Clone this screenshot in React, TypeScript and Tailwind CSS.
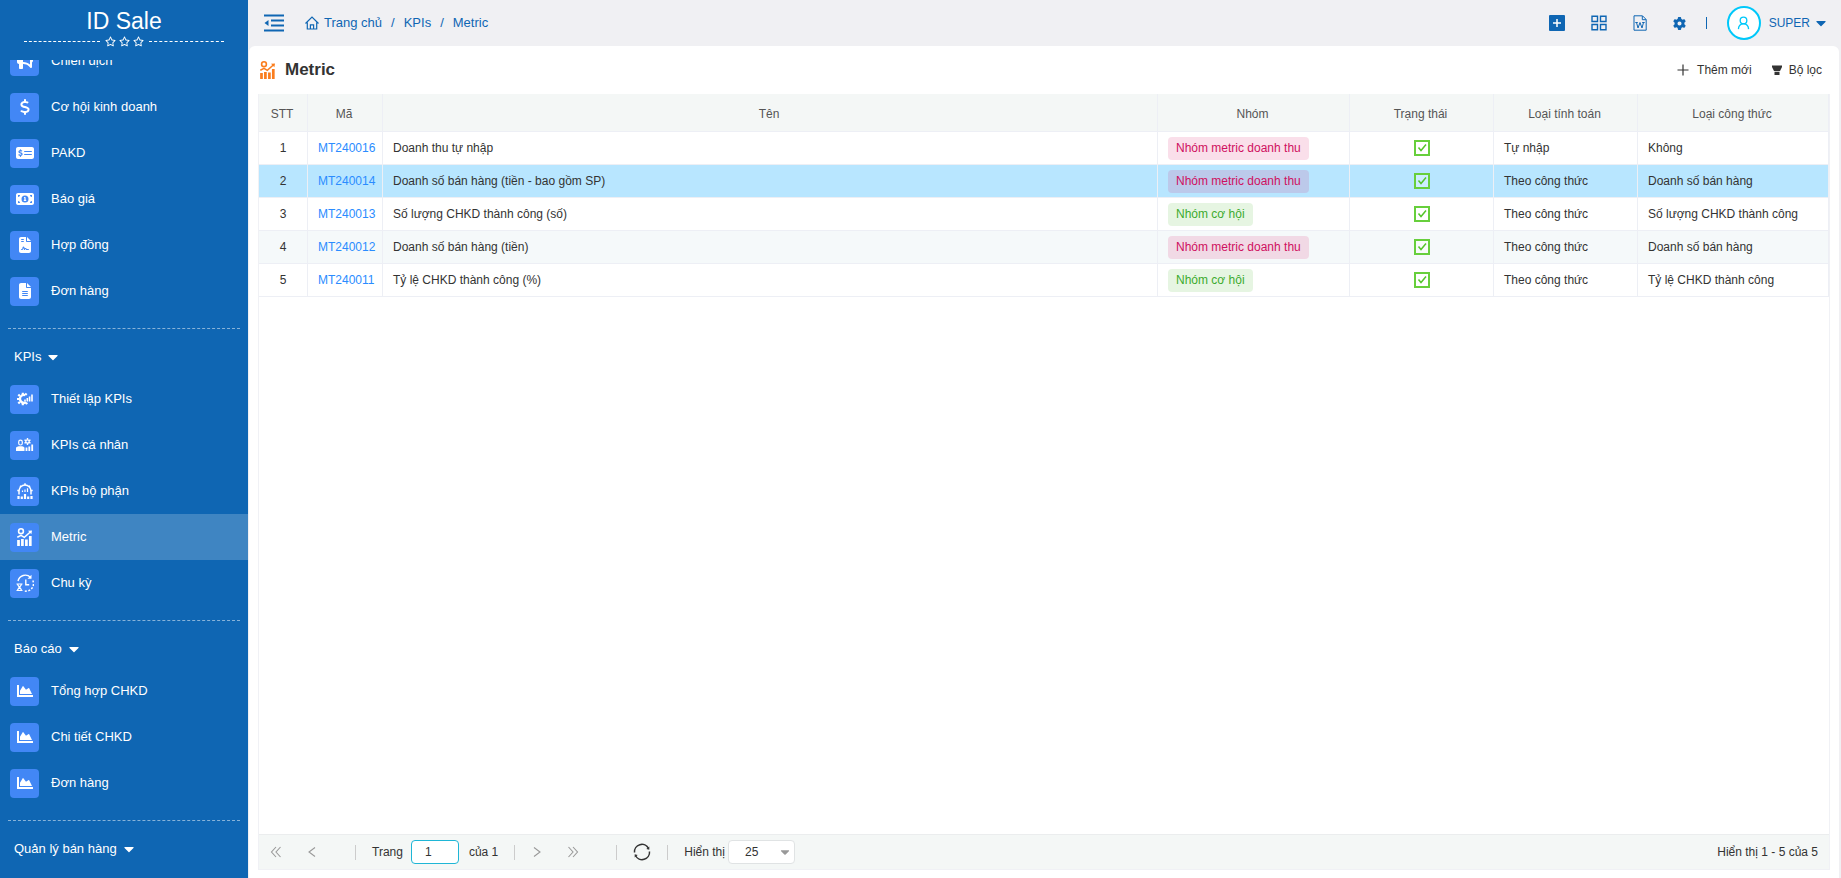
import React, { useState } from 'react';
import { FaCaretDown, FaChartArea } from 'react-icons/fa';
import {
  FaBullhorn,
  FaDollarSign,
  FaFileContract,
  FaFileLines,
  FaGear,
  FaMoneyBill1,
  FaMoneyCheckDollar,
  FaRegStar,
} from 'react-icons/fa6';

type IconProps = { className?: string };

const MetricIcon = ({ className }: IconProps) => (
  <svg viewBox="0 0 15 18" className={className} fill="none" stroke="currentColor" aria-hidden="true">
    <circle cx="4" cy="3.200" r="2.400" strokeWidth="1.600" />
    <path d="M.300 9.300L4 7.300l3.300 2L13.300 4" strokeWidth="1.500" />
    <path d="M11 2.800l4-.300-.600 3.800z" fill="currentColor" stroke="none" />
    <path d="M1.500 12v6M5.400 11v7M9.400 11.500v6.500M13.300 8v10" strokeWidth="2.700" />
  </svg>
);

const GearChartIcon = ({ className }: IconProps) => (
  <svg viewBox="0 0 16 16" className={className} fill="none" stroke="currentColor" aria-hidden="true">
    <path d="M8.500 4.200A4 4 0 1 0 9 11.300" strokeWidth="2.400" />
    <path d="M5.800 4V1.800M2.800 5L1.300 3.500M2 8H0M2.800 11l-1.500 1.500M5.800 12v2.200M9 11.500l1 1.700M8.500 4l1-1.600" strokeWidth="2.200" />
    <path d="M8 8.500v2M10.300 7v3.500M12.600 5.500v5M15 3.500v7" strokeWidth="1.600" />
  </svg>
);

const PersonKpiIcon = ({ className }: IconProps) => (
  <svg viewBox="0 0 18 16" className={className} fill="none" stroke="currentColor" aria-hidden="true">
    <path d="M2.700 5a1.800 1.800 0 0 1 3.600 0v1.200a1.800 1.800 0 0 1-3.600 0z" strokeWidth="1.200" />
    <path d="M0 14v-3c0-1.200 1.800-1.700 4.500-1.700S8.500 9.800 8.500 11v3z" fill="currentColor" stroke="none" />
    <circle cx="11.500" cy="4.500" r="1.700" strokeWidth="1.300" />
    <path d="M11.500 1v1.800M11.500 6.200V8M8.500 2.800l1.500.800M13 5.400l1.500.800M8.500 6.200l1.500-.800M13 3.600l1.500-.800" strokeWidth="1.400" />
    <path d="M10.500 14v-3.500M13.300 14v-4.500M16.200 14V7.500" strokeWidth="1.800" />
  </svg>
);

const TeamKpiIcon = ({ className }: IconProps) => (
  <svg viewBox="0 0 16 16" className={className} fill="none" stroke="currentColor" aria-hidden="true">
    <path d="M2 11.500V8a6 6 0 0 1 12 0v3.500" strokeWidth="1.500" />
    <path d="M8 .300v2M3 2.700l1.300 1.400M13 2.700l-1.300 1.400M.300 7.500h2M13.700 7.500h2" strokeWidth="1.500" />
    <path d="M5.500 9V7.500M8 9V6.500M10.500 9V5.200" strokeWidth="1.200" />
    <path d="M1.500 16v-3M4.800 16v-2.500M8 16v-5M11.200 16v-2.500M14.500 16v-3" strokeWidth="2.200" />
  </svg>
);

const CycleIcon = ({ className }: IconProps) => (
  <svg viewBox="0 0 18 18" className={className} fill="none" stroke="currentColor" aria-hidden="true">
    <path d="M2 7a7.500 7.500 0 0 1 12.500-3.700" strokeWidth="1.400" />
    <path d="M15.500.800v4h-4z" fill="currentColor" stroke="none" />
    <path d="M16.800 6.500A7.500 7.500 0 0 1 8.500 17" strokeWidth="1.500" strokeDasharray="2 1.500" />
    <path d="M9.800 5.500v5.300h3.400" strokeWidth="1.400" />
    <path d="M.500 10h6M.500 16.500h6M1.500 10c0 2 4 4.500 4 6.500M5.500 10c0 2-4 4.500-4 6.500" strokeWidth="1.200" />
  </svg>
);

const CollapseIcon = () => (
  <svg viewBox="0 0 20 18" className="h-[18px] w-5" fill="none" stroke="currentColor" aria-hidden="true">
    <path d="M0 1.500h20M7 6.500h13M7 11.500h13M0 16.500h20" strokeWidth="1.800" />
    <path d="M4.500 6v6L.500 9z" fill="currentColor" stroke="none" />
  </svg>
);

const HomeIcon = () => (
  <svg viewBox="0 0 14 14" className="size-[14px]" fill="none" stroke="currentColor" aria-hidden="true">
    <path d="M.500 7.500L7 1l6.500 6.500M2.300 6.500V13h9.400V6.500M5.400 13V8.800h3.200V13" strokeWidth="1.200" />
  </svg>
);

const PlusSquareIcon = () => (
  <svg viewBox="0 0 16 16" className="size-4" aria-hidden="true">
    <rect width="16" height="16" rx="1" fill="currentColor" />
    <path d="M8 4v8M4 8h8" stroke="#fff" strokeWidth="1.500" />
  </svg>
);

const GridIcon = () => (
  <svg viewBox="0 0 16 16" className="size-4" fill="none" stroke="currentColor" strokeWidth="1.400" aria-hidden="true">
    <path d="M1 1.200h5.500v5.300H1zM9.500 1.200H15v5.300H9.500zM1 9.500h5.500v5.300H1zM9.500 9.500H15v5.300H9.500z" />
  </svg>
);

const WordIcon = () => (
  <svg viewBox="0 0 14 16" className="h-4 w-[14px]" fill="none" stroke="currentColor" aria-hidden="true">
    <path d="M1 .800h8.500l3.700 3.700v10.700H1z" />
    <path d="M9.300 1v3.700H13" />
    <path d="M2.300 7.500h2.500M9.200 7.500h2.500M3.500 7.500L5 13l2-5.500L9 13l1.500-5.500" />
  </svg>
);

const UserIcon = () => (
  <svg viewBox="0 0 14 16" className="h-[14px] w-[13px]" fill="none" stroke="currentColor" strokeWidth="1.500" aria-hidden="true">
    <circle cx="7" cy="5" r="3.800" />
    <path d="M1.200 15c.200-3.500 2.300-6 5.800-6s5.600 2.500 5.800 6" />
  </svg>
);

const AddIcon = () => (
  <svg viewBox="0 0 12 12" className="size-3" stroke="currentColor" aria-hidden="true">
    <path d="M6 .500v11M.500 6h11" strokeWidth="1.200" />
  </svg>
);

const FilterIcon = () => (
  <svg viewBox="0 0 10 11" className="h-[11px] w-[10px]" fill="currentColor" aria-hidden="true">
    <path d="M0 .500h10v1.500L8 6H2L0 2zM2.500 6.800h5V10h-5z" />
  </svg>
);

const RefreshIcon = () => (
  <svg viewBox="0 0 18 18" className="size-[18px]" fill="none" stroke="currentColor" strokeWidth="1.500" aria-hidden="true">
    <path d="M1.500 9.500A7.400 7.400 0 0 1 15.500 5.500M16.500 8.500A7.400 7.400 0 0 1 2.500 12.500" />
    <path d="M16.300 3.500v3.200l-3-.700zM1.700 14.500v-3.200l3 .700z" fill="currentColor" stroke="none" />
  </svg>
);

const Chevron = ({ double, right }: { double?: boolean; right?: boolean }) => (
  <svg
    viewBox="0 0 12 12"
    className={right ? 'size-3 rotate-180' : 'size-3'}
    fill="none"
    stroke="currentColor"
    strokeWidth="1.100"
    aria-hidden="true"
  >
    {double ? <path d="M6 1L1.500 6 6 11M10.500 1L6 6l4.500 5" /> : <path d="M9 1.500L3 6l6 4.500" />}
  </svg>
);

const faIcon = 'size-4';

const menuSections = [
  {
    title: '',
    items: [
      { label: 'Chiến dịch', icon: <FaBullhorn className={faIcon} /> },
      { label: 'Cơ hội kinh doanh', icon: <FaDollarSign className={faIcon} /> },
      { label: 'PAKD', icon: <FaMoneyCheckDollar className="size-[18px]" /> },
      { label: 'Báo giá', icon: <FaMoneyBill1 className="size-[18px]" /> },
      { label: 'Hợp đồng', icon: <FaFileContract className={faIcon} /> },
      { label: 'Đơn hàng', icon: <FaFileLines className={faIcon} /> },
    ],
  },
  {
    title: 'KPIs',
    items: [
      { label: 'Thiết lập KPIs', icon: <GearChartIcon className={faIcon} /> },
      { label: 'KPIs cá nhân', icon: <PersonKpiIcon className="h-4 w-[18px]" /> },
      { label: 'KPIs bộ phận', icon: <TeamKpiIcon className={faIcon} /> },
      { label: 'Metric', icon: <MetricIcon className="h-[18px] w-[15px]" /> },
      { label: 'Chu kỳ', icon: <CycleIcon className="size-[18px]" /> },
    ],
  },
  {
    title: 'Báo cáo',
    items: [
      { label: 'Tổng hợp CHKD', icon: <FaChartArea className={faIcon} /> },
      { label: 'Chi tiết CHKD', icon: <FaChartArea className={faIcon} /> },
      { label: 'Đơn hàng', icon: <FaChartArea className={faIcon} /> },
    ],
  },
  { title: 'Quản lý bán hàng', items: [] },
];

const metrics = [
  { code: 'MT240016', name: 'Doanh thu tự nhập', group: 'Nhóm metric doanh thu', calc: 'Tự nhập', formula: 'Không' },
  { code: 'MT240014', name: 'Doanh số bán hàng (tiền - bao gồm SP)', group: 'Nhóm metric doanh thu', calc: 'Theo công thức', formula: 'Doanh số bán hàng' },
  { code: 'MT240013', name: 'Số lượng CHKD thành công (số)', group: 'Nhóm cơ hội', calc: 'Theo công thức', formula: 'Số lượng CHKD thành công' },
  { code: 'MT240012', name: 'Doanh số bán hàng (tiền)', group: 'Nhóm metric doanh thu', calc: 'Theo công thức', formula: 'Doanh số bán hàng' },
  { code: 'MT240011', name: 'Tỷ lệ CHKD thành công (%)', group: 'Nhóm cơ hội', calc: 'Theo công thức', formula: 'Tỷ lệ CHKD thành công' },
];

const columns = [
  { title: 'STT', width: 'w-[49px]' },
  { title: 'Mã', width: 'w-[75px]' },
  { title: 'Tên', width: '' },
  { title: 'Nhóm', width: 'w-48' },
  { title: 'Trạng thái', width: 'w-36' },
  { title: 'Loại tính toán', width: 'w-36' },
  { title: 'Loại công thức', width: 'w-[191px]' },
];

const Sidebar = ({ active, onSelect }: { active: string; onSelect: (key: string) => void }) => (
  <aside className="flex w-[248px] shrink-0 flex-col overflow-hidden bg-[#0f66b3] text-[13px] text-white">
    <div className="flex h-[60px] shrink-0 flex-col items-center px-6 pt-[6px]">
      <h1 className="text-[23px] leading-[30px]">ID Sale</h1>
      <div className="flex w-full items-center gap-1">
        <span className="flex-1 border-t border-dashed border-white" />
        <span className="flex gap-[3px] px-px">
          <FaRegStar className="size-[11px]" />
          <FaRegStar className="size-[11px]" />
          <FaRegStar className="size-[11px]" />
        </span>
        <span className="flex-1 border-t border-dashed border-white" />
      </div>
    </div>
    <nav className="min-h-0 flex-1 overflow-hidden">
      {/* list is scrolled a little, the first entry is cut by the header */}
      <div className="-mt-[22px]">
        {menuSections.map((section) => (
          <div key={section.title}>
            {section.title && (
              <div className="mt-[14px]">
                <div className="mx-2 border-t border-dashed border-white/50" />
                <button className="flex h-[47px] w-full items-center gap-1 px-[14px] pt-[9px]">
                  {section.title}
                  <FaCaretDown className="size-4" />
                </button>
              </div>
            )}
            {section.items.map((item) => {
              const key = section.title + item.label;
              return (
                <a
                  key={key}
                  href="#"
                  onClick={() => onSelect(key)}
                  className={`flex h-[46px] items-center gap-3 px-[10px] ${active === key ? 'bg-[#3f85c2]' : ''}`}
                >
                  <span className="flex size-[29px] items-center justify-center rounded bg-[#4287f5]">{item.icon}</span>
                  {item.label}
                </a>
              );
            })}
          </div>
        ))}
      </div>
    </nav>
  </aside>
);

const TopBar = () => (
  <header className="flex h-[46px] shrink-0 items-center justify-between pr-3 pl-4 text-[#0f66b3]">
    <div className="flex items-center gap-[21px]">
      <button aria-label="Thu gọn">
        <CollapseIcon />
      </button>
      <nav className="flex items-center gap-[9px] text-[13px]">
        <a href="#" className="flex items-center gap-[5px]">
          <HomeIcon />
          Trang chủ
        </a>
        <span>/</span>
        <a href="#">KPIs</a>
        <span>/</span>
        <a href="#">Metric</a>
      </nav>
    </div>
    <div className="flex items-center text-xs">
      <div className="flex items-center gap-[26px]">
        <button aria-label="Thêm"><PlusSquareIcon /></button>
        <button aria-label="Ứng dụng"><GridIcon /></button>
        <button aria-label="Tài liệu"><WordIcon /></button>
        <button aria-label="Cài đặt"><FaGear className="size-[13px]" /></button>
      </div>
      <span className="mx-5 h-3 w-px bg-[#0f66b3]" />
      <button className="flex items-center gap-2">
        <span className="flex size-[34px] items-center justify-center rounded-full border-2 border-[#00c8fa] bg-white text-[#00c8fa]">
          <UserIcon />
        </span>
        <span className="flex items-center gap-[3px]">
          SUPER
          <FaCaretDown className="size-4" />
        </span>
      </button>
    </div>
  </header>
);

const App: React.FC = () => {
  const [active, setActive] = useState<string>('KPIsMetric');
  const [selected, setSelected] = useState<string>('MT240014');
  const [page, setPage] = useState<string>('1');

  const rowColor = (code: string, index: number) => {
    if (code === selected) return 'bg-[#b8e6ff]';
    return index % 2 === 1 ? 'bg-[#f5f9fa]' : 'bg-white';
  };

  return (
    <div className="flex h-screen overflow-hidden bg-[#f0f0f3] font-['Liberation_Sans',Arial,sans-serif] text-[#333]">
      <Sidebar active={active} onSelect={setActive} />
      <div className="flex min-w-0 flex-1 flex-col">
        <TopBar />
        <main className="mr-[2px] ml-px flex min-h-0 flex-1 flex-col rounded-t-md bg-white px-[9px] pb-2 text-xs">
          <div className="flex h-12 shrink-0 items-center justify-between pr-2 pl-[2px]">
            <div className="flex items-center gap-[10px]">
              <MetricIcon className="h-[18px] w-[15px] text-[#fa7d1e]" />
              <h2 className="text-[17px] font-bold">Metric</h2>
            </div>
            <div className="flex items-center gap-5">
              <button className="flex items-center gap-2"><AddIcon />Thêm mới</button>
              <button className="flex items-center gap-[7px]"><FilterIcon />Bộ lọc</button>
            </div>
          </div>

          <div className="flex min-h-0 flex-1 flex-col border border-t-0 border-[#f0f1f5]">
            <div className="min-h-0 flex-1 overflow-hidden">
              <table className="w-full table-fixed border-separate border-spacing-0">
                <thead>
                  <tr className="bg-[#f4f7f6] text-[#555]">
                    {columns.map((col) => (
                      <th key={col.title} className={`h-[38px] border-r border-b border-[#edeff5] pt-[3px] pr-[2px] font-normal ${col.width}`}>
                        {col.title}
                      </th>
                    ))}
                  </tr>
                </thead>
                <tbody>
                  {metrics.map((metric, index) => (
                    <tr
                      key={metric.code}
                      onClick={() => setSelected(metric.code)}
                      className={`*:h-[33px] *:border-r *:border-b *:border-[#edeff5] *:px-[10px] *:py-0 ${rowColor(metric.code, index)}`}
                    >
                      <td className="text-center">{index + 1}</td>
                      <td><a href="#" className="text-[#2a8cff]">{metric.code}</a></td>
                      <td>{metric.name}</td>
                      <td>
                        <span
                          className={`inline-block rounded px-2 leading-[23px] ${
                            metric.group === 'Nhóm cơ hội' ? 'bg-[#3cb521]/13 text-[#3cab2e]' : 'bg-[#d6065a]/13 text-[#cf1060]'
                          }`}
                        >
                          {metric.group}
                        </span>
                      </td>
                      <td>
                        <label className="relative mx-auto block size-4">
                          <input
                            type="checkbox"
                            defaultChecked
                            aria-label={metric.name}
                            className="peer block size-4 appearance-none border-2 border-[#67cf3c] bg-white/30"
                          />
                          <svg viewBox="0 0 16 16" className="absolute inset-0 hidden peer-checked:block" fill="none" stroke="#55c52c" strokeWidth="1.500">
                            <path d="M4.500 7.500L7 10.500l5-6" />
                          </svg>
                        </label>
                      </td>
                      <td>{metric.calc}</td>
                      <td>{metric.formula}</td>
                    </tr>
                  ))}
                </tbody>
              </table>
            </div>

            <footer className="flex h-[35px] shrink-0 items-center justify-between border-t border-[#ebedee] bg-[#f4f7f6] px-[11px]">
              <div className="flex items-center">
                <div className="flex items-center gap-6 text-[#999]">
                  <button aria-label="Trang đầu"><Chevron double /></button>
                  <button aria-label="Trang trước"><Chevron /></button>
                </div>
                <span className="mr-4 ml-[37px] h-[15px] w-px bg-[#ccc]" />
                <label className="flex items-center gap-2">
                  Trang
                  <input
                    value={page}
                    onChange={(e) => setPage(e.target.value)}
                    className="h-6 w-12 rounded-sm border border-[#1fb6d6] bg-white px-[13px] outline-none"
                  />
                </label>
                <span className="ml-[10px]">của 1</span>
                <span className="mx-4 h-[15px] w-px bg-[#ccc]" />
                <div className="flex items-center gap-6 text-[#999]">
                  <button aria-label="Trang sau"><Chevron right /></button>
                  <button aria-label="Trang cuối"><Chevron double right /></button>
                </div>
                <span className="mr-4 ml-[37px] h-[15px] w-px bg-[#ccc]" />
                <button aria-label="Tải lại"><RefreshIcon /></button>
                <span className="mx-4 h-[15px] w-px bg-[#ccc]" />
                <label className="flex items-center gap-[3px]">
                  Hiển thị
                  <span className="relative">
                    <select defaultValue="25" className="block h-6 w-[67px] appearance-none rounded-sm border border-[#e0e3e4] bg-white px-4 outline-none">
                      <option>25</option>
                      <option>50</option>
                      <option>100</option>
                    </select>
                    <FaCaretDown className="pointer-events-none absolute top-[5px] right-[3px] size-[14px] text-[#999]" />
                  </span>
                </label>
              </div>
              <span>Hiển thị 1 - 5 của 5</span>
            </footer>
          </div>
        </main>
      </div>
    </div>
  );
};

export default App;
